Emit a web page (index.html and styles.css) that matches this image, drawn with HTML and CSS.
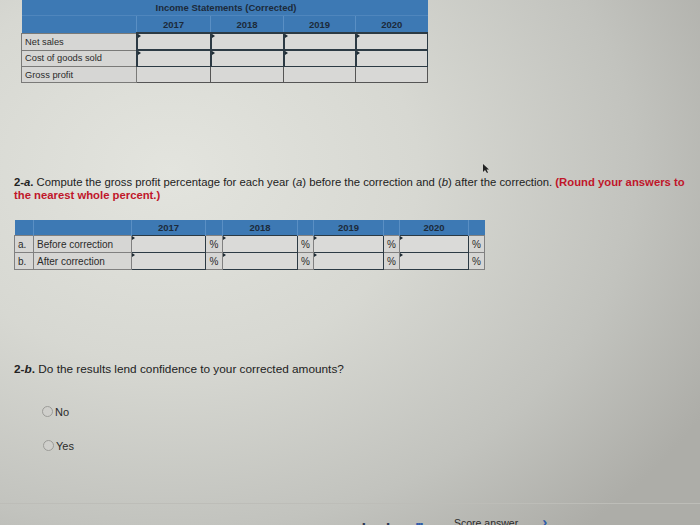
FILE: index.html
```html
<!DOCTYPE html>
<html>
<head>
<meta charset="utf-8">
<link rel="stylesheet" href="styles.css">
</head>
<body>
<div class="screen">
  <table class="is-table">
    <colgroup>
      <col class="c-label"><col class="c-y1"><col class="c-y2"><col class="c-y3"><col class="c-y4">
    </colgroup>
    <tr class="h1"><th></th><th colspan="4" class="title">Income Statements (Corrected)</th></tr>
    <tr class="h2"><th></th><th>2017</th><th>2018</th><th>2019</th><th>2020</th></tr>
    <tr><td class="lbl">Net sales</td><td class="inp"></td><td class="inp"></td><td class="inp"></td><td class="inp"></td></tr>
    <tr><td class="lbl">Cost of goods sold</td><td class="inp"></td><td class="inp"></td><td class="inp"></td><td class="inp"></td></tr>
    <tr><td class="lbl">Gross profit</td><td class="calc"></td><td class="calc"></td><td class="calc"></td><td class="calc"></td></tr>
  </table>

  <p class="q q1"><b>2-<i>a</i>.</b> Compute the gross profit percentage for each year (<i>a</i>) before the correction and (<i>b</i>) after the correction. <b class="red">(Round your answers to the nearest whole percent.)</b></p>

  <table class="pct-table">
    <colgroup>
      <col class="w19"><col class="w98"><col class="w74"><col class="w17"><col class="w75"><col class="w16"><col class="w70"><col class="w16"><col class="w69"><col class="w16">
    </colgroup>
    <tr class="ph"><th></th><th></th><th>2017</th><th></th><th>2018</th><th></th><th>2019</th><th></th><th>2020</th><th></th></tr>
    <tr><td class="let">a.</td><td class="lbl">Before correction</td><td class="inp"></td><td class="pc">%</td><td class="inp"></td><td class="pc">%</td><td class="inp"></td><td class="pc">%</td><td class="inp"></td><td class="pc">%</td></tr>
    <tr><td class="let">b.</td><td class="lbl">After correction</td><td class="inp"></td><td class="pc">%</td><td class="inp"></td><td class="pc">%</td><td class="inp"></td><td class="pc">%</td><td class="inp"></td><td class="pc">%</td></tr>
  </table>

  <p class="q q2"><b>2-<i>b</i>.</b> Do the results lend confidence to your corrected amounts?</p>

  <div class="radios">
    <label class="radio"><span class="dot"></span>No</label>
    <label class="radio r2"><span class="dot"></span>Yes</label>
  </div>

  <div class="footer">
    <span class="mk">▪</span><span class="mk small">ˌ</span><span class="mk">▪</span>
    <span class="grid">▪▪▪</span>
    <span class="score">Score answer</span>
    <span class="chev">›</span>
  </div>
</div>
<svg class="cursor" width="8" height="11" viewBox="0 0 8 11"><path d="M1 1 L1 9 L3 7 L5 10 L6 9.5 L4.5 6.5 L7 6.5 Z" fill="#222"/></svg>
</body>
</html>
```
FILE: styles.css
```css
html, body {
  margin: 0;
  padding: 0;
}
body {
  width: 700px;
  height: 525px;
  overflow: hidden;
  position: relative;
  font-family: "Liberation Sans", Arial, sans-serif;
  color: #222;
  background:
    radial-gradient(ellipse 620px 480px at 170px 170px, #e3e4de 0%, #d7d8d2 40%, #c2c3be 75%, #adada8 100%);
}
.screen {
  width: 700px;
  height: 525px;
  display: flex;
  flex-direction: column;
  align-items: flex-start;
}

/* top table */
.is-table {
  margin-left: 21px;
  border-collapse: collapse;
  table-layout: fixed;
  width: 406px;
  font-size: 9.5px;
}
.c-label { width: 115px; }
.c-y1 { width: 74px; }
.c-y2 { width: 73px; }
.c-y3 { width: 72px; }
.c-y4 { width: 72px; }
.is-table th {
  background: #3d79b4;
  color: #1c2a3a;
  font-weight: bold;
  padding: 0;
}
.is-table .h1 th { height: 15px; border-bottom: 1px solid #4f86bd; }
.is-table .h1 .title { text-align: left; padding-left: 19px; font-size: 9.5px; vertical-align: middle; }
.is-table .h2 th { height: 16px; border-left: 1px solid #5a8fc4; }
.is-table .h2 th:first-child { border-left: none; }
.is-table td {
  height: 15px;
  padding: 0;
  background: #d6d6d4;
}
.is-table .lbl {
  border: 1px solid #7a7a78;
  padding-left: 3px;
  font-size: 9.3px;
  color: #2a2a2a;
}
.is-table .inp {
  border: 1px solid #2c3a44;
  border-top-width: 2px;
  border-left-width: 2px;
  background: #d9d9d7;
  position: relative;
}
.inp::before {
  content: "";
  position: absolute;
  left: 0;
  top: 0;
  border-left: 3px solid #1d2a33;
  border-top: 2px solid transparent;
  border-bottom: 2px solid transparent;
}
.is-table .calc {
  border: 1px solid #555;
  background: #d8d8d6;
}

/* question text */
.q {
  margin: 0;
  margin-left: 14px;
  font-size: 11.3px;
  line-height: 12.5px;
  color: #222;
  width: 684px;
}
.q1 { margin-top: 93px; }
.red { color: #c0162a; }

/* pct table */
.pct-table {
  margin-left: 14px;
  margin-top: 19px;
  border-collapse: collapse;
  table-layout: fixed;
  width: 470px;
  font-size: 9.5px;
}
.w19 { width: 19px; }
.w98 { width: 98px; }
.w74 { width: 74px; }
.w17 { width: 17px; }
.w75 { width: 75px; }
.w16 { width: 16px; }
.w70 { width: 70px; }
.w69 { width: 69px; }
.pct-table th {
  background: #3d79b4;
  height: 15px;
  padding: 0;
  color: #1c2a3a;
  font-weight: bold;
  border-left: 1px solid #5a8fc4;
}
.pct-table th:first-child { border-left: none; }
.pct-table td {
  height: 16px;
  padding: 0;
  background: #d6d6d4;
  border: 1px solid #808080;
  font-size: 10px;
  color: #2a2a2a;
}
.pct-table .let { padding-left: 3px; }
.pct-table .lbl { padding-left: 3px; }
.pct-table .pc { text-align: center; }
.pct-table .inp {
  border: 1.5px solid #2c3a44;
  background: #dadad8;
  position: relative;
}

/* radios */
.q2 { margin-top: 93px; font-size: 11.8px; }
.radios {
  margin-left: 42px;
  margin-top: 30px;
  display: flex;
  flex-direction: column;
  gap: 22px;
}
.radio {
  display: flex;
  align-items: center;
  font-size: 11px;
  color: #2a2a2a;
}
.dot {
  width: 9px;
  height: 9px;
  border-radius: 50%;
  border: 1px solid #9c9c98;
  background: #cfcfcb;
  margin-right: 2px;
}
.r2 { margin-left: 1px; }

/* footer */
.footer {
  margin-top: 51px;
  width: 700px;
  border-top: 1px solid #bdbdb8;
  padding-top: 9px;
  display: flex;
  align-items: baseline;
  font-size: 10.5px;
  color: #2b2b2b;
  padding-left: 362px;
  box-sizing: border-box;
}
.mk { color: #2a3550; font-size: 9px; margin-right: 10px; }
.mk.small { margin-right: 8px; }
.grid { color: #2f5ba8; font-size: 9px; letter-spacing: -1px; margin-left: 16px; margin-right: 32px; }
.score { color: #2a2a2a; }
.chev { color: #2f5ba8; font-size: 15px; margin-left: 24px; font-weight: bold; }

.cursor {
  position: absolute;
  left: 482px;
  top: 163px;
}
```
